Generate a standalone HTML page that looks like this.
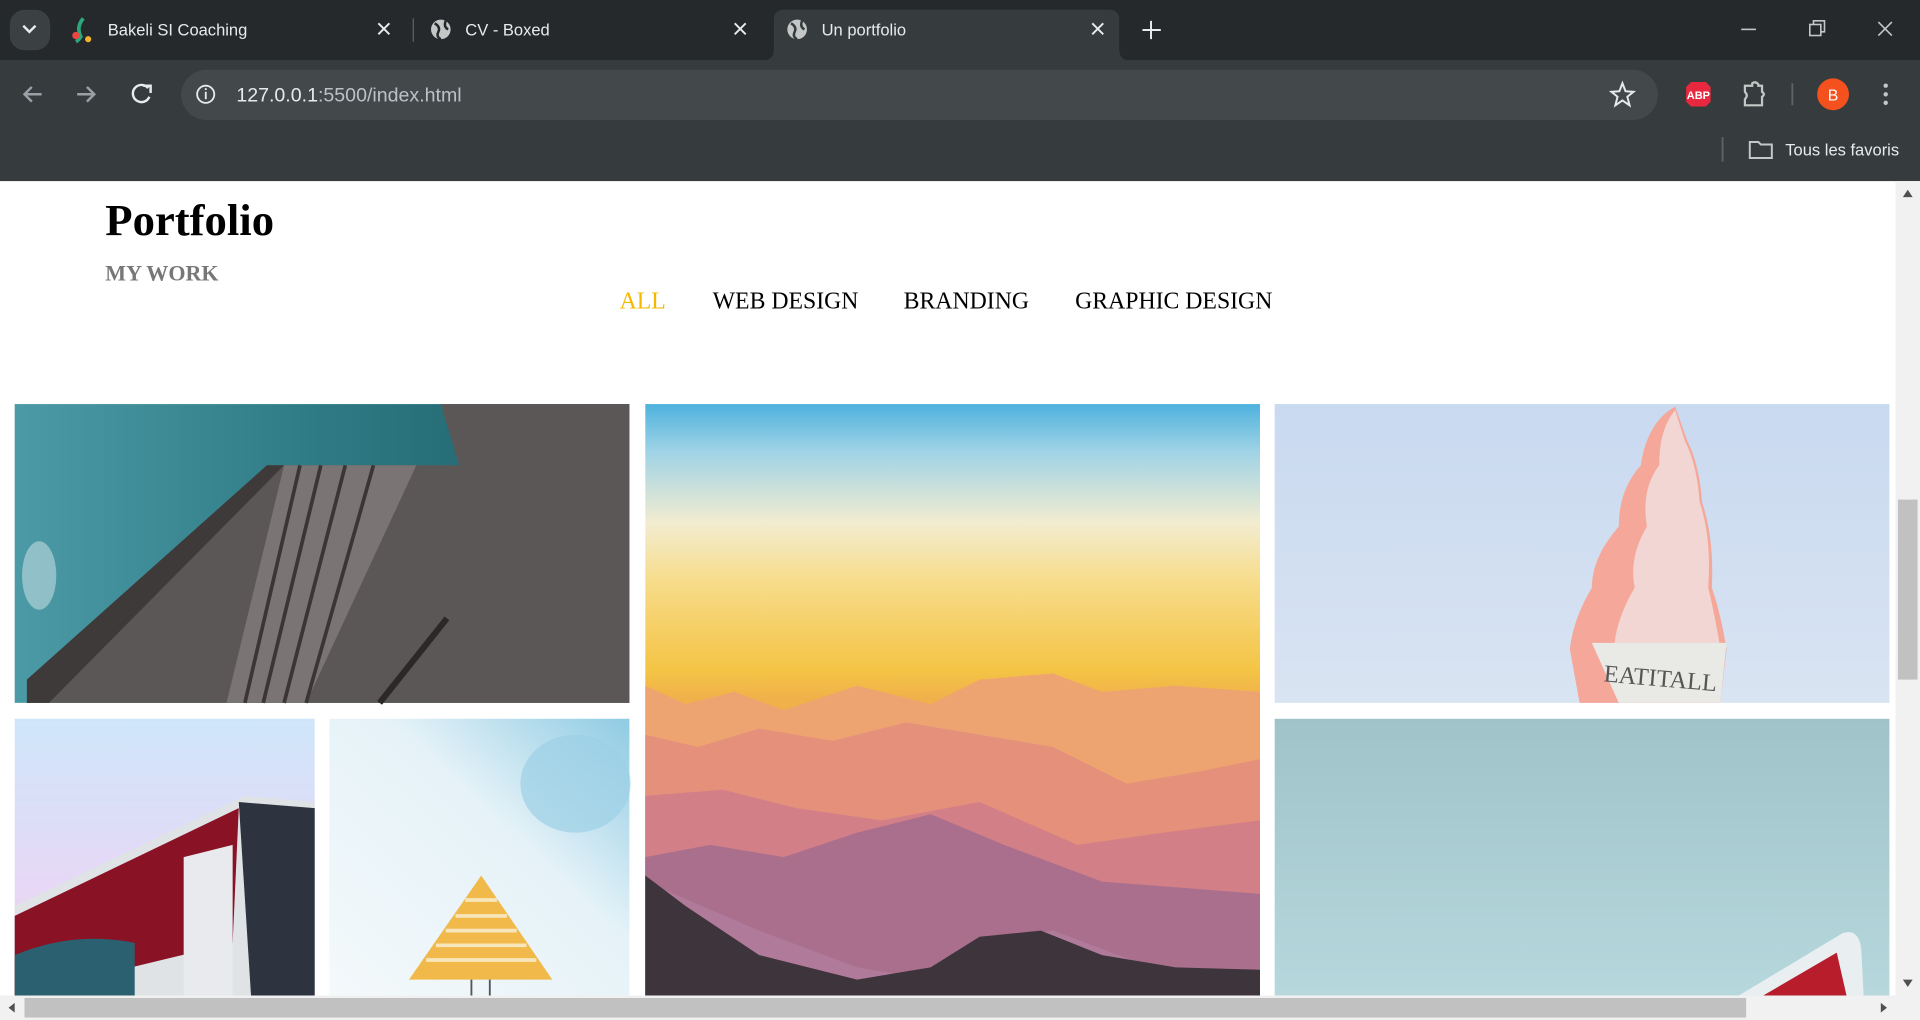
<!DOCTYPE html>
<html><head><meta charset="utf-8"><style>
html,body{margin:0;padding:0;width:1920px;height:1020px;overflow:hidden;background:#fff}
svg{display:block}
</style></head><body>
<svg width="1920" height="1020" viewBox="0 0 1568 833" preserveAspectRatio="none" xmlns="http://www.w3.org/2000/svg">
<defs>
<linearGradient id="g1" x1="0" y1="0" x2="1" y2="0"><stop offset="0" stop-color="#4b9aa6"/><stop offset="0.5" stop-color="#2e7a84"/><stop offset="1" stop-color="#1f5e66"/></linearGradient>
<linearGradient id="g2" x1="0" y1="0" x2="0" y2="1">
<stop offset="0" stop-color="#4eb2de"/><stop offset="0.08" stop-color="#9fd3e6"/><stop offset="0.2" stop-color="#f2ecd0"/><stop offset="0.3" stop-color="#f7dc8a"/><stop offset="0.45" stop-color="#f4c445"/><stop offset="0.5" stop-color="#f0b04a"/><stop offset="1" stop-color="#e59a6a"/></linearGradient>
<linearGradient id="g3" x1="0" y1="0" x2="0" y2="1"><stop offset="0" stop-color="#c9d9f0"/><stop offset="1" stop-color="#d9e4f2"/></linearGradient>
<linearGradient id="g4" x1="0" y1="0" x2="0" y2="1"><stop offset="0" stop-color="#cfe6fa"/><stop offset="0.6" stop-color="#e6d8f6"/><stop offset="1" stop-color="#f3d3ea"/></linearGradient>
<linearGradient id="g5" x1="1" y1="0" x2="0" y2="1"><stop offset="0" stop-color="#8fcbe3"/><stop offset="0.4" stop-color="#e5f2f8"/><stop offset="1" stop-color="#f4f9fb"/></linearGradient>
<linearGradient id="g6" x1="0" y1="0" x2="0" y2="1"><stop offset="0" stop-color="#9fc3c9"/><stop offset="1" stop-color="#b6d8dd"/></linearGradient>
</defs>
<rect x="0" y="0" width="1568" height="49" fill="#25292c"/>
<rect x="0" y="49" width="1568" height="99" fill="#363c3e"/>
<path d="M624 49 Q632 49 632 40 V16 Q632 8 640 8 H906 Q914 8 914 16 V40 Q914 49 922 49 Z" fill="#363c3e"/>
<rect x="8" y="8" width="33" height="33" rx="12" fill="#3b4043"/>
<path d="M19 21 L24 26 L29 21" stroke="#e8eaed" stroke-width="2" fill="none"/>
<path d="M68 15 Q62 22 66 30 Q64 33 62 34" stroke="#2aa87a" stroke-width="3" fill="none"/><circle cx="62" cy="29" r="3" fill="#e44"/><circle cx="72" cy="32" r="2.5" fill="#f6b22c"/>
<g font-family="Liberation Sans, sans-serif" font-size="13.5" fill="#e8eaed">
<text x="88" y="29">Bakeli SI Coaching</text>
<text x="380" y="29">CV - Boxed</text>
<text x="671" y="29">Un portfolio</text>
</g>
<g stroke="#e8eaed" stroke-width="1.6"><path d="M309 19 L318 28 M318 19 L309 28"/><path d="M600 19 L609 28 M609 19 L600 28"/><path d="M892 19 L901 28 M901 19 L892 28"/><path d="M940 17 V32 M933 24.5 H948"/></g>
<rect x="337" y="15" width="1" height="19" fill="#5f6368"/>
<circle cx="360" cy="24" r="8" fill="#c4c7c5"/><path d="M355 19 Q360 22 358 26 Q356 30 360 32 M364 17 Q362 22 366 24" stroke="#25292c" stroke-width="2" fill="none"/>
<circle cx="651" cy="24" r="8" fill="#c4c7c5"/><path d="M646 19 Q651 22 649 26 Q647 30 651 32 M655 17 Q653 22 657 24" stroke="#363c3e" stroke-width="2" fill="none"/>
<g stroke="#c4c7c5" stroke-width="1.3" fill="none"><path d="M1422 24 H1434"/><rect x="1478" y="20" width="9" height="9"/><path d="M1481 20 V17 H1490 V26 H1487"/><path d="M1534 18 L1545 29 M1545 18 L1534 29"/></g>
<g stroke="#9aa0a6" stroke-width="2" fill="none"><path d="M34 77 H20 M26 71 L20 77 L26 83"/><path d="M63 77 H77 M71 71 L77 77 L71 83"/></g>
<path d="M121 72 A7 7 0 1 0 122 79" stroke="#e8eaed" stroke-width="2" fill="none"/><path d="M117 70 L123 70 L123 76" stroke="#e8eaed" stroke-width="2" fill="none"/>
<rect x="148" y="57" width="1206" height="41" rx="20.5" fill="#43494b"/>
<circle cx="168" cy="77" r="7" fill="none" stroke="#e8eaed" stroke-width="1.5"/><rect x="167.3" y="75" width="1.5" height="6" fill="#e8eaed"/><rect x="167.3" y="72" width="1.5" height="1.5" fill="#e8eaed"/>
<text x="193" y="83" font-family="Liberation Sans, sans-serif" font-size="16" fill="#bdc1c6"><tspan fill="#e8eaed">127.0.0.1</tspan>:5500/index.html</text>
<path d="M1325 68 L1327.5 74.5 L1334 75 L1329 79 L1330.8 86 L1325 82 L1319.2 86 L1321 79 L1316 75 L1322.5 74.5 Z" fill="none" stroke="#e8eaed" stroke-width="1.6"/>
<path d="M1381 67 H1393 L1397 71 V83 L1393 87 H1381 L1377 83 V71 Z" fill="#e8283f"/>
<text x="1387" y="81" text-anchor="middle" font-family="Liberation Sans, sans-serif" font-weight="bold" font-size="9" fill="#fff">ABP</text>
<path d="M1425 70 H1431 V68 Q1434 66 1436 69 V70 H1439 V75 Q1442 77 1439 79 V86 H1425 V81 Q1428 78 1425 75 Z" fill="none" stroke="#c4c7c5" stroke-width="1.8"/>
<rect x="1463" y="68" width="1.5" height="18" fill="#5f6368"/>
<circle cx="1497" cy="77" r="13" fill="#f4511e"/>
<text x="1497" y="82" text-anchor="middle" font-family="Liberation Sans, sans-serif" font-size="13" fill="#fff">B</text>
<g fill="#c4c7c5"><circle cx="1540" cy="70" r="1.8"/><circle cx="1540" cy="77" r="1.8"/><circle cx="1540" cy="84" r="1.8"/></g>
<rect x="1406" y="112" width="1.5" height="20" fill="#5f6368"/>
<path d="M1429 116 H1436 L1438 118 H1447 V129 H1429 Z" fill="none" stroke="#c4c7c5" stroke-width="1.6"/>
<text x="1458" y="127" font-family="Liberation Sans, sans-serif" font-size="13.5" fill="#e8eaed">Tous les favoris</text>
<rect x="0" y="148" width="1568" height="685" fill="#fff"/>
<text x="86" y="192" font-family="Liberation Serif, serif" font-weight="bold" font-size="36.5" fill="#000">Portfolio</text>
<text x="86" y="229" font-family="Liberation Serif, serif" font-weight="bold" font-size="18" fill="#777">MY WORK</text>
<g font-family="Liberation Serif, serif" font-size="19.4" fill="#000">
<text x="506" y="252" fill="#f5b800">ALL</text>
<text x="582" y="252">WEB DESIGN</text>
<text x="738" y="252">BRANDING</text>
<text x="878" y="252">GRAPHIC DESIGN</text>
</g>
<rect x="12" y="330" width="502" height="244" fill="url(#g1)"/>
<ellipse cx="32" cy="470" rx="14" ry="28" fill="#d7e7ec" opacity="0.5"/>
<path d="M360 330 H514 V574 H22 V555 L218 380 H375 Z" fill="#5b5756"/>
<path d="M22 555 L218 380 H232 L40 574 H22 Z" fill="#3e3a3a"/>
<path d="M185 574 L232 380 H340 L250 574 Z" fill="#7a7574"/>
<path d="M200 574 L245 380 M215 574 L262 380 M232 574 L282 380 M250 574 L305 380" stroke="#3a3636" stroke-width="3"/>
<path d="M310 574 L365 505" stroke="#2c2828" stroke-width="5"/>
<rect x="527" y="330" width="502" height="483" fill="url(#g2)"/>
<path d="M527 560 L560 575 L600 565 L640 580 L700 560 L760 575 L800 555 L860 550 L900 565 L960 560 L1029 565 V813 H527 Z" fill="#eea471"/>
<path d="M527 600 L570 610 L620 595 L680 605 L740 590 L800 600 L860 610 L920 640 L980 630 L1029 620 V813 H527 Z" fill="#e5907b"/>
<path d="M527 650 L590 645 L650 660 L720 670 L800 655 L880 690 L950 680 L1029 670 V813 H527 Z" fill="#d27f87"/>
<path d="M527 700 L580 690 L640 700 L700 680 L760 665 L820 690 L900 720 L1029 730 V813 H527 Z" fill="#a96f8c"/>
<path d="M527 720 L620 760 L700 790 L760 800 L800 770 L860 760 L940 790 L1029 795 V813 H527 Z" fill="#b07b9a"/>
<path d="M527 715 L560 740 L620 780 L700 800 L760 790 L800 765 L850 760 L900 780 L960 790 L1029 792 V813 H527 Z" fill="#3d343c"/>
<rect x="1041" y="330" width="502" height="244" fill="url(#g3)"/>
<path d="M1368 332 Q1345 345 1340 380 Q1322 400 1322 430 Q1300 455 1300 480 Q1285 505 1282 530 L1290 574 H1405 L1410 530 Q1405 500 1398 480 Q1400 440 1390 410 Q1388 380 1378 360 Z" fill="#f5a89a"/>
<path d="M1368 335 Q1355 350 1355 380 Q1340 400 1345 430 Q1330 455 1335 480 Q1320 505 1318 530 L1405 530 Q1400 500 1395 480 Q1398 440 1388 410 Q1386 380 1376 360 Z" fill="#f1d6d3"/>
<path d="M1300 525 L1410 525 L1405 574 H1322 Z" fill="#e9e9e6"/>
<text x="1310" y="560" font-family="Liberation Serif, serif" font-size="20" fill="#555" transform="rotate(5 1350 550)">EATITALL</text>
<rect x="12" y="587" width="245" height="226" fill="url(#g4)"/>
<path d="M12 740 L200 650 L257 655 V813 H12 Z" fill="#dfe3e6"/>
<path d="M12 748 L195 660 L190 770 L12 813 Z" fill="#8a1225"/>
<path d="M12 780 Q60 760 110 770 V813 H12 Z" fill="#2a6070"/>
<path d="M195 655 L257 660 V813 H205 Z" fill="#2d3440"/>
<path d="M150 700 L190 690 V813 H150 Z" fill="#e8eaee"/>
<rect x="269" y="587" width="245" height="226" fill="url(#g5)"/>
<ellipse cx="470" cy="640" rx="45" ry="40" fill="#9dd0e6" opacity="0.7"/>
<path d="M393 715 L334 800 H451 Z" fill="#f0b94a"/>
<path d="M380 735 H406 M372 748 H414 M364 760 H422 M356 772 H430 M348 784 H438" stroke="#f7e5bb" stroke-width="3"/>
<path d="M385 800 V813 M400 800 V813" stroke="#555" stroke-width="1.5"/>
<rect x="1041" y="587" width="502" height="226" fill="url(#g6)"/>
<path d="M1420 813 L1505 762 Q1518 758 1520 775 L1522 813 Z" fill="#e9eef0"/>
<path d="M1440 813 L1500 778 L1508 813 Z" fill="#b81d2c"/>
<rect x="1548" y="148" width="20" height="665" fill="#f1f1f1"/>
<rect x="1550" y="408" width="16" height="147" fill="#c1c1c1"/>
<path d="M1554 161 L1558 155 L1562 161 Z" fill="#505050"/><path d="M1554 800 L1558 806 L1562 800 Z" fill="#505050"/>
<rect x="0" y="813" width="1568" height="20" fill="#f1f1f1"/>
<rect x="20" y="815" width="1406" height="16" fill="#c1c1c1"/>
<path d="M12 819 L7 823 L12 827 Z" fill="#505050"/><path d="M1536 819 L1541 823 L1536 827 Z" fill="#505050"/>
</svg>
</body></html>
